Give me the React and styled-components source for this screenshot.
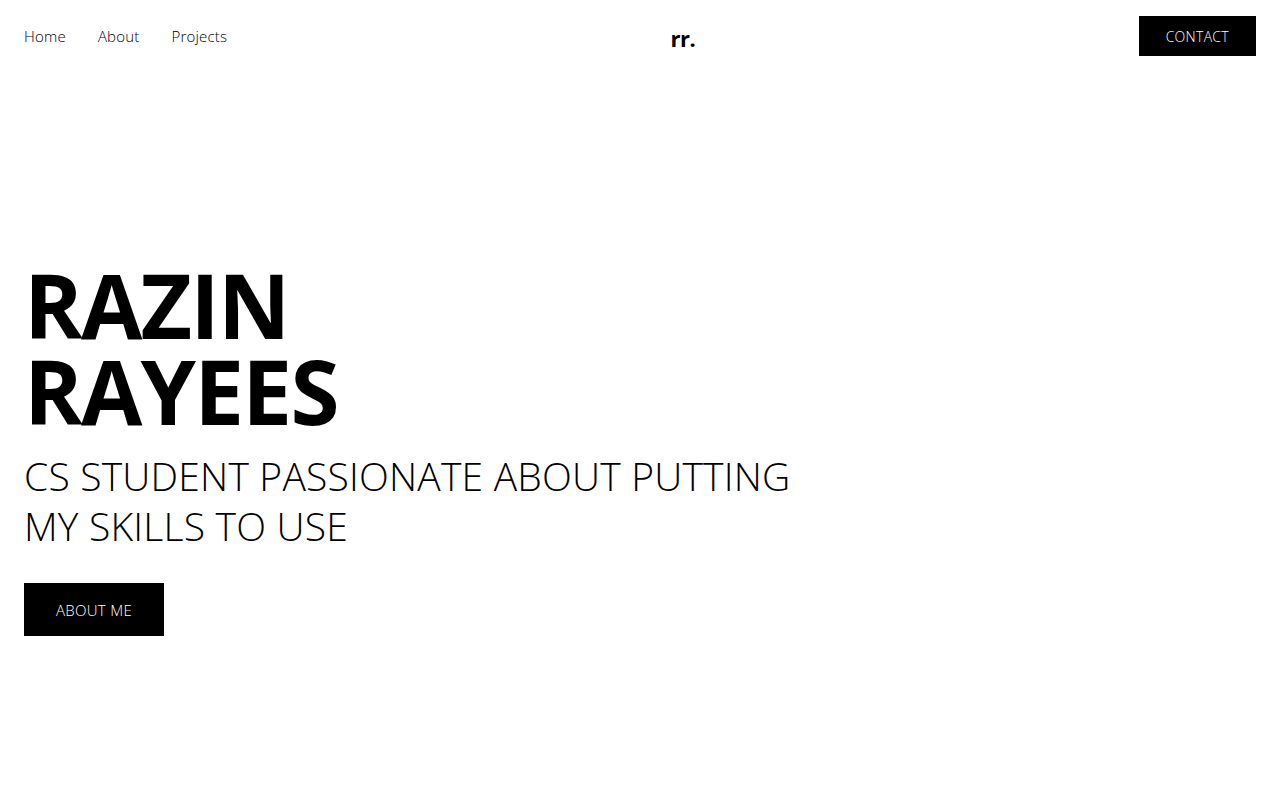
import React from 'react'
import styled, { createGlobalStyle } from 'styled-components'

const GlobalStyle = createGlobalStyle`
  * {
    box-sizing: border-box;
  }
  body {
    margin: 0;
    background: #ffffff;
    color: #000000;
    font-family: "Open Sans", "Noto Sans", sans-serif;
  }
`;

const Page = styled.div`
  min-height: 100vh;
  display: flex;
  flex-direction: column;
`;

// nav, logo and button spread with space-between (logo sits between them, not page center)
const Header = styled.header`
  display: flex;
  justify-content: space-between;
  align-items: center;
  padding: 16px 24px;
`;

const Nav = styled.nav`
  display: flex;
  gap: 32px;
`;

const NavLink = styled.a`
  font-size: 15px;
  font-weight: 300;
  letter-spacing: 0.2px;
  color: #000;
  text-decoration: none;
  cursor: pointer;
`;

const Logo = styled.div`
  font-size: 22px;
  font-weight: 700;
  letter-spacing: -0.5px;
  padding-top: 4px;
`;

const Button = styled.button`
  background: #000;
  color: #fff;
  border: none;
  font-family: inherit;
  font-weight: 300;
  font-size: ${(p) => p.$size || 14}px;
  letter-spacing: 0.3px;
  height: ${(p) => p.$h || 40}px;
  padding: 0 ${(p) => p.$px || 27}px;
  cursor: pointer;
`;

const Hero = styled.main`
  padding: 190px 24px 0;
`;

const Name = styled.h1`
  margin: 0;
  font-size: 89px;
  font-weight: 700;
  line-height: 86px;
  letter-spacing: -1.8px;
`;

const Tagline = styled.p`
  margin: 17px 0 0;
  font-size: 39px;
  font-weight: 300;
  line-height: 50px;
  letter-spacing: 0.2px;
  max-width: 820px;
`;

const Actions = styled.div`
  margin-top: 32px;
`;

export default function App() {
  return (
    <Page>
      <GlobalStyle />
      <Header>
        <Nav>
          <NavLink>Home</NavLink>
          <NavLink>About</NavLink>
          <NavLink>Projects</NavLink>
        </Nav>
        <Logo>rr.</Logo>
        <Button>CONTACT</Button>
      </Header>
      <Hero>
        <Name>
          RAZIN
          <br />
          RAYEES
        </Name>
        <Tagline>
          CS STUDENT PASSIONATE ABOUT PUTTING
          <br />
          MY SKILLS TO USE
        </Tagline>
        <Actions>
          <Button $size={15} $h={53} $px={32}>ABOUT ME</Button>
        </Actions>
      </Hero>
    </Page>
  )
}
